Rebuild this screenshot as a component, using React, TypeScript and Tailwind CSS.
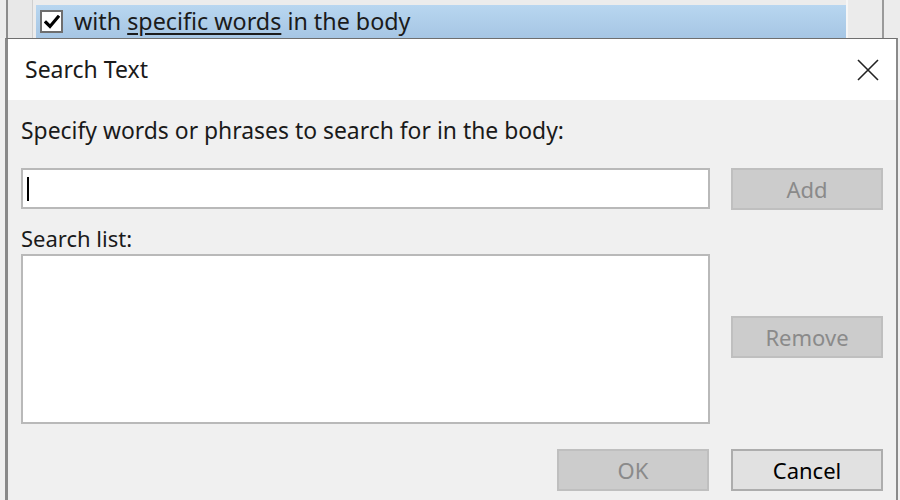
import React from "react";

const font = { fontFamily: '"Noto Sans", "Open Sans", sans-serif' };

function Button({ label, disabled, className = "" }: { label: string; disabled?: boolean; className?: string }) {
    return (
        <div
            className={`w-[152px] h-[42px] flex items-center justify-center text-[22px] leading-none border-2 ${
                disabled ? "bg-[#cccccc] border-[#bfbfbf] text-[#8a8a8a]" : "bg-[#e1e1e1] border-[#adadad] text-black"
            } ${className}`}
        >
            {label}
        </div>
    );
}

export default function App() {
    return (
        <div className="w-[900px] h-[500px] bg-[#f0f0f0] overflow-hidden flex flex-col" style={font}>
            {/* underlying rules window row */}
            <div className="h-[38px] flex shrink-0 bg-[#ececec]">
                <div className="w-[6px]" />
                <div className="w-[27px] border-l-2 border-[#8c8c8c] border-r border-r-[#cfcfcf] bg-[#e8e8e8]" />
                <div className="w-[3px]" />
                <div className="w-[810px] mt-[5px] bg-gradient-to-b from-[#b8d6f0] to-[#a6c6e4] flex items-center pl-[4px] gap-[11px]">
                    <div className="w-[23px] h-[23px] border-2 border-[#6e6e6e] bg-white flex items-center justify-center">
                        <svg width="16" height="14" viewBox="0 0 16 14">
                            <path d="M2 7.5 L6 11.5 L14 2" fill="none" stroke="#000" strokeWidth="3.2" strokeLinecap="square" />
                        </svg>
                    </div>
                    <span className="text-[23.3px] text-[#1b1b1b] leading-none">
                        with <span className="underline underline-offset-[3px]">specific words</span> in the body
                    </span>
                </div>
                <div className="w-[38px] border-l-2 border-[#f6f6f6] border-r-2 border-r-[#9a9a9a] bg-[#ebebeb]" />
            </div>

            {/* dialog */}
            <div className="ml-[5px] w-[893px] flex-1 flex flex-col border-t border-[#6f6f6f] border-l-[3px] border-l-[#8a8a8a] border-r-2 border-r-[#8a8a8a] bg-[#f0f0f0]">
                <div className="h-[61px] bg-white flex items-center justify-between pl-[17px] pr-[16px] shrink-0">
                    <span className="text-[23px] text-[#1a1a1a] leading-none">Search Text</span>
                    <svg width="24" height="24" viewBox="0 0 24 24">
                        <path d="M2 2 L22 22 M22 2 L2 22" stroke="#222" strokeWidth="1.6" />
                    </svg>
                </div>

                <div className="pl-[13px] pr-[13px] pt-[19px] flex flex-col">
                    <div className="text-[22.9px] text-[#1a1a1a] leading-[24px]">
                        Specify words or phrases to search for in the body:
                    </div>

                    <div className="flex justify-between mt-[25px]">
                        <div className="w-[689px] h-[41px] bg-white border-2 border-[#b9b9b9] flex items-center pl-[4px]">
                            <div className="w-[2px] h-[24px] bg-black" />
                        </div>
                        <Button label="Add" disabled />
                    </div>

                    <div className="text-[22px] text-[#1a1a1a] leading-[24px] mt-[16px]">Search list:</div>

                    <div className="flex justify-between mt-[4px]">
                        <div className="w-[689px] h-[170px] bg-white border-2 border-[#b9b9b9]" />
                        <div className="flex flex-col pt-[62px]">
                            <Button label="Remove" disabled />
                        </div>
                    </div>

                    <div className="flex justify-end gap-[22px] mt-[25px]">
                        <Button label="OK" disabled />
                        <Button label="Cancel" />
                    </div>
                </div>
            </div>
        </div>
    );
}
